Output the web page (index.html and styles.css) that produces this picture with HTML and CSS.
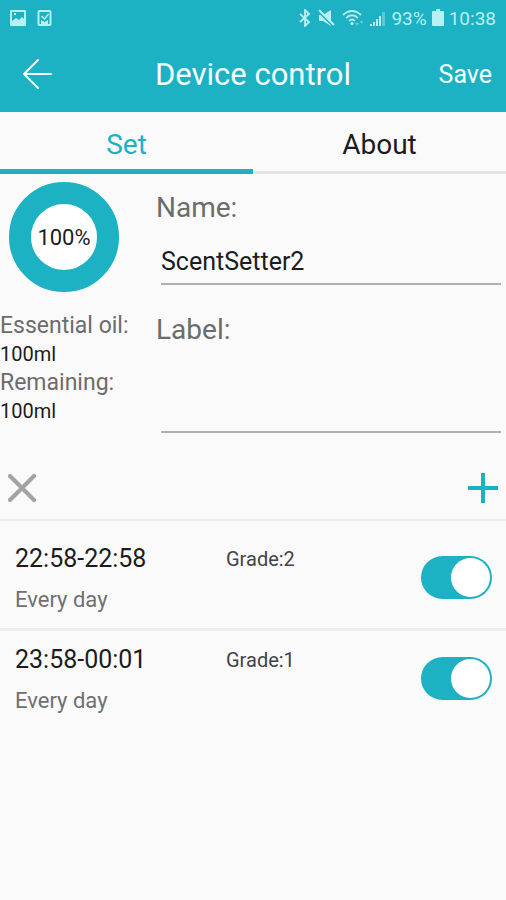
FILE: index.html
```html
<!DOCTYPE html>
<html lang="en">
<head>
<meta charset="utf-8">
<meta name="viewport" content="width=device-width, initial-scale=1">
<title>Device control</title>
<link rel="stylesheet" href="styles.css">
</head>
<body>
<header class="top">
  <div class="status">
    <svg width="18" height="18" viewBox="0 0 18 18" aria-hidden="true"><path fill="currentColor" fill-rule="evenodd" d="M2 1h14q1 0 1 1v14q0 1-1 1H2q-1 0-1-1V2q0-1 1-1zM3 3v9l4-3 3 2 3-3 2 2V3zM5 4h2v2H5z"/></svg>
    <svg width="15" height="18" viewBox="0 0 15 18" aria-hidden="true"><rect x="1.500" y="2" width="12" height="14" rx="1" fill="none" stroke="currentColor" stroke-width="2"/><path d="M4.500 7l3 3 4-5" fill="none" stroke="currentColor" stroke-width="1.500"/><path d="M4 15v-4l3.500 2 3.500-2v4z" fill="currentColor"/></svg>
    <div class="status-right">
      <svg width="12" height="18" viewBox="0 0 12 18" aria-hidden="true"><path d="M1 5l9 8-4 4V1l4 4-9 8" fill="none" stroke="currentColor" stroke-width="1.800"/></svg>
      <svg class="mute" width="17" height="18" viewBox="0 0 17 18" aria-hidden="true"><path d="M1 6h4l8-5v16l-8-5H1z" fill="currentColor"/><path d="M0 2l15 15" stroke="#1cb1c3" stroke-width="2"/><path d="M1 1l15 15" stroke="currentColor" stroke-width="2"/></svg>
      <svg width="22" height="18" viewBox="0 0 22 18" aria-hidden="true"><g fill="none" stroke="currentColor" stroke-width="1.700"><path d="M1 6q9-8 18 0M4 9q6-5.500 12 0M7 12q3-3 6 0"/></g><circle cx="10" cy="14.500" r="1.600" fill="currentColor"/><path d="M13 14h4l-2 3zM18 12h3l-1.500 3z" fill="currentColor" opacity=".5"/></svg>
      <svg width="17" height="18" viewBox="0 0 17 18" aria-hidden="true"><path d="M1 15h2v2H1zM4 13h2v4H4zM7 10h2v7H7zM10 7h2v10h-2z" fill="currentColor"/><path d="M13 3h3v14h-3z" fill="currentColor" opacity=".4"/></svg>
      <span class="percent">93%</span>
      <svg width="12" height="18" viewBox="0 0 12 18" aria-hidden="true"><path d="M4 0h4v2h3q1 0 1 1v13q0 1-1 1H1q-1 0-1-1V3q0-1 1-1h3z" fill="currentColor"/></svg>
      <span>10:38</span>
    </div>
  </div>
  <div class="bar">
    <button class="back" type="button" aria-label="Back"><svg width="30" height="32" viewBox="0 0 30 32"><path d="M16 2L2 16l14 14M2 16h27" fill="none" stroke="currentColor" stroke-width="2" stroke-linecap="round" stroke-linejoin="round"/></svg></button>
    <h1>Device control</h1>
    <button class="save" type="button">Save</button>
  </div>
</header>
<nav class="tabs">
  <a class="tab active" href="#set">Set</a>
  <a class="tab" href="#about">About</a>
</nav>
<main>
  <section class="device" id="set">
    <div class="oil">
      <div class="donut">100%</div>
      <dl>
        <dt>Essential oil:</dt><dd>100ml</dd>
        <dt>Remaining:</dt><dd>100ml</dd>
      </dl>
    </div>
    <div class="fields">
      <label for="name">Name:</label>
      <input class="field" id="name" type="text" value="ScentSetter2">
      <label for="label">Label:</label>
      <input class="field field-tall" id="label" type="text">
    </div>
  </section>
  <div class="tools">
    <button class="remove" type="button" aria-label="Delete"><svg width="28" height="28" viewBox="0 0 28 28"><path d="M2 2l24 24M26 2L2 26" stroke="currentColor" stroke-width="4" stroke-linecap="round"/></svg></button>
    <button class="add" type="button" aria-label="Add"><svg width="30" height="30" viewBox="0 0 30 30"><path d="M15 0v30M0 15h30" stroke="currentColor" stroke-width="4"/></svg></button>
  </div>
  <ul class="schedule">
    <li class="row">
      <div class="when"><span class="time">22:58-22:58</span><span class="days">Every day</span></div>
      <span class="grade">Grade:2</span>
      <input class="switch" type="checkbox" role="switch" aria-label="22:58-22:58" checked>
    </li>
    <li class="row">
      <div class="when"><span class="time">23:58-00:01</span><span class="days">Every day</span></div>
      <span class="grade">Grade:1</span>
      <input class="switch" type="checkbox" role="switch" aria-label="23:58-00:01" checked>
    </li>
  </ul>
</main>
</body>
</html>
```
FILE: styles.css
```css
* { box-sizing: border-box; }
:root { --teal: #1cb1c3; }
body {
  margin: 0;
  min-height: 100vh;
  background: #fafafa;
  color: #1c1c1c;
  font-family: Roboto, "Liberation Sans", sans-serif;
}
button {
  padding: 0;
  border: 0;
  background: none;
  color: inherit;
  font: inherit;
}
svg { display: block; }
.top { background: var(--teal); color: #f4ffff; }
.status {
  display: flex;
  align-items: center;
  gap: 10px;
  height: 36px;
  padding: 0 10px 0 9px;
  color: #b9f0f5;
  font-size: 19px;
}
.status-right {
  display: flex;
  align-items: center;
  gap: 5px;
  margin-left: auto;
}
.mute { margin: 0 2px; }
.bar {
  display: grid;
  grid-template-columns: 1fr auto 1fr;
  align-items: center;
  height: 76px;
  padding: 0 14px 0 22px;
}
.bar h1 { margin: 0 8px 0 0; font-size: 31px; font-weight: 400; }
.save { justify-self: end; font-size: 25px; }
.tabs { display: grid; grid-template-columns: 1fr 1fr; height: 62px; }
.tab {
  display: flex;
  align-items: center;
  justify-content: center;
  padding-top: 6px;
  border-bottom: 3px solid #e4e4e4;
  color: inherit;
  font-size: 28px;
  text-decoration: none;
}
.tab.active { padding-top: 8px; border-bottom: 5px solid var(--teal); color: var(--teal); }
.device { display: grid; grid-template-columns: 156px 1fr; }
.oil { padding-top: 8px; }
.donut {
  display: flex;
  align-items: center;
  justify-content: center;
  width: 110px;
  height: 110px;
  margin-left: 9px;
  border: 22px solid var(--teal);
  border-radius: 50%;
  background: #fff;
  font-size: 22px;
}
dl { margin: 19px 0 0; line-height: 29px; }
dt { color: #6c6c6c; font-size: 23px; white-space: nowrap; }
dd { margin: 0; font-size: 20px; line-height: 28px; }
.fields { display: flex; flex-direction: column; padding: 16px 5px 0 0; }
.fields label { color: #6c6c6c; font-size: 28px; line-height: 36px; }
.field {
  height: 48px;
  margin: 11px 0 27px 5px;
  padding: 2px 0 0;
  border: 0;
  border-bottom: 2px solid #b0b0b0;
  border-radius: 0;
  background: none;
  color: inherit;
  font: 25px Roboto, "Liberation Sans", sans-serif;
  outline: 0;
}
.field-tall { height: 74px; margin-bottom: 24px; }
.tools {
  display: flex;
  align-items: center;
  justify-content: space-between;
  height: 64px;
  padding: 0 8px;
  border-bottom: 2px solid #ececec;
}
.remove { color: #a3a3a3; }
.add { color: var(--teal); }
.schedule { margin: 0; padding: 6px 0 0; list-style: none; }
.row {
  display: grid;
  grid-template-columns: 211px 1fr auto;
  height: 101px;
  padding: 13px 14px 0 15px;
}
.row + .row { border-top: 3px solid #ececec; padding-top: 10px; }
.when { display: flex; flex-direction: column; gap: 4px; }
.time { font-size: 25px; line-height: 38px; }
.days { color: #707070; font-size: 22px; line-height: 36px; }
.grade { color: #444; font-size: 20px; line-height: 38px; }
.switch {
  appearance: none;
  display: flex;
  width: 71px;
  height: 43px;
  margin: 16px 0 0;
  padding: 2px;
  border-radius: 22px;
  background: #c4c4c4;
}
.switch:checked { justify-content: flex-end; background: var(--teal); }
.switch::before {
  content: "";
  width: 39px;
  height: 39px;
  border-radius: 50%;
  background: #fff;
}
```
